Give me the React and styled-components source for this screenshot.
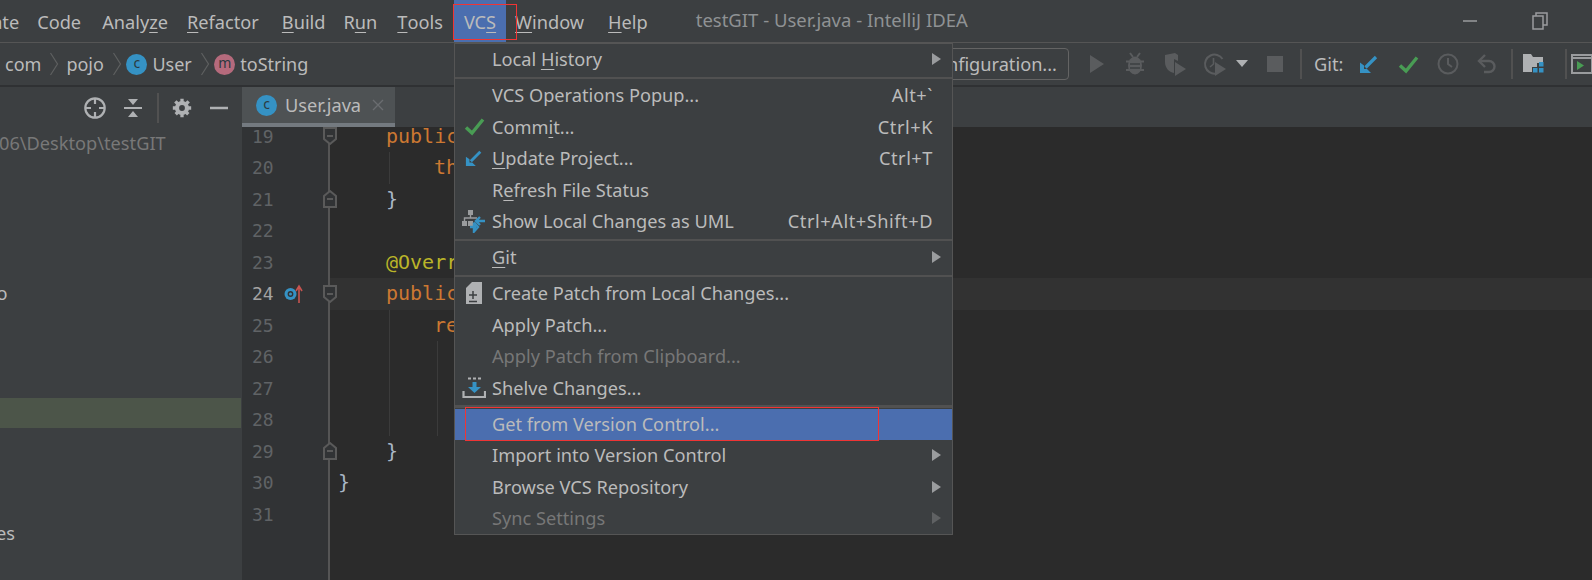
import React from 'react';
import styled, { createGlobalStyle } from 'styled-components';

const UI_FONT = '"Noto Sans", "Open Sans", sans-serif';
const BLUE = '#3592c4';
const GREEN = '#499c54';
const HL = '#4b6eaf';

const Global = createGlobalStyle`
  html, body { margin: 0; padding: 0; background: #3c3f41; }
  body { font-family: ${UI_FONT}; color: #bbb; }
  * { box-sizing: border-box; }
`;

const Page = styled.div`
  position: relative;
  width: 1592px;
  height: 580px;
  overflow: hidden;
  background: #3c3f41;
  font-size: 18.2px;
`;

const MenuBar = styled.div`
  display: flex;
  align-items: center;
  height: 43px;
  border-bottom: 1px solid #555;
`;

const MenuItem = styled.div`
  display: flex;
  align-items: center;
  height: 42px;
  padding: 1px ${p => p.$pad ?? 10}px 0;
  margin-left: ${p => p.$ml || 0}px;
  background: ${p => (p.$active ? HL : 'transparent')};
`;

const Mn = styled.span`
  text-decoration: underline;
  text-underline-offset: 3px;
  text-decoration-thickness: 1px;
`;

const Title = styled.div`
  margin: -3px 0 0 38px;
  font-size: 18.5px;
  color: #8f9294;
`;

const WinButtons = styled.div`
  display: flex;
  align-items: center;
  gap: 54px;
  margin-left: auto;
  margin-right: 44px;
`;

const NavBar = styled.div`
  display: flex;
  align-items: center;
  height: 44px;
  border-bottom: 2px solid #2f3133;
  overflow: hidden;
`;

const Crumbs = styled.div`
  display: flex;
  align-items: center;
  flex: 1;
  min-width: 0;
  padding-left: 5px;
  font-size: 18px;
`;

const CrumbSep = styled.svg`
  width: 10px;
  height: 24px;
  margin: 0 ${p => p.$gap - 18}px 0 8px;
  flex-shrink: 0;
`;

const Badge = styled.span`
  display: inline-flex;
  align-items: center;
  justify-content: center;
  flex-shrink: 0;
  width: 21px;
  height: 21px;
  margin-right: 5px;
  border-radius: 50%;
  background: ${p => p.$bg};
  color: #2b3a40;
  font-size: 14px;
  line-height: 1;
  padding-bottom: 2px;
`;

const ToolGroup = styled.div`
  display: flex;
  align-items: center;
  flex-shrink: 0;
  margin-right: -10px;
`;

const ConfigButton = styled.div`
  width: 260px;
  height: 32px;
  margin-right: 10px;
  padding-right: 11px;
  border: 1px solid #646464;
  border-radius: 4px;
  text-align: right;
  line-height: 31px;
  white-space: nowrap;
`;

const ToolSlot = styled.div`
  display: flex;
  align-items: center;
  justify-content: center;
  width: ${p => p.$w || 40}px;
  height: 30px;
  margin-left: ${p => p.$ml || 0}px;
`;

const ToolSep = styled.div`
  width: 2px;
  height: 30px;
  margin: 0 ${p => p.$mr || 0}px 0 ${p => p.$ml || 0}px;
  background: #515151;
`;

const GitLabel = styled.span`
  width: 35px;
`;

const Body = styled.div`
  display: flex;
  height: 493px;
`;

const Sidebar = styled.aside`
  width: 241px;
  flex-shrink: 0;
  overflow: hidden;
`;

const SideHeader = styled.div`
  display: flex;
  align-items: center;
  height: 41px;
  padding-left: 84px;
`;

const HeadIcon = styled.div`
  display: flex;
  align-items: center;
  justify-content: center;
  width: ${p => p.$w || 22}px;
  margin-right: ${p => p.$mr || 0}px;
`;

const HeadSep = styled.div`
  width: 2px;
  height: 30px;
  margin-right: 13px;
  background: #515151;
`;

const TreeRow = styled.div`
  display: flex;
  align-items: center;
  height: 30px;
  white-space: nowrap;
  background: ${p => (p.$selected ? '#4c5549' : 'transparent')};
  color: ${p => (p.$muted ? '#787878' : '#bbb')};
`;

const TreeLabel = styled.span`
  margin-left: ${p => p.$shift}px;
`;

const EditorPane = styled.section`
  flex: 1;
  min-width: 0;
  margin-left: 1px;
  display: flex;
  flex-direction: column;
`;

const TabStrip = styled.div`
  display: flex;
  height: 40px;
  flex-shrink: 0;
  background: #3c3f41;
`;

const Tab = styled.div`
  display: flex;
  align-items: center;
  width: 153px;
  height: 40px;
  padding-left: 14px;
  background: #4e5254;
  border-bottom: 4px solid #747a80;

  ${Badge} {
    margin-right: 8px;
  }
`;

const TabClose = styled.svg`
  width: 14px;
  height: 14px;
  margin-left: 10px;
`;

const Editor = styled.div`
  flex: 1;
  display: flex;
  overflow: hidden;
  background: #2b2b2b;
  font-family: "DejaVu Sans Mono", monospace;
`;

const Gutter = styled.div`
  position: relative;
  z-index: 1;
  width: 88px;
  flex-shrink: 0;
  background: #313335;
  border-right: 2px solid #555;
`;

const Lines = styled.div`
  margin-top: -6.5px;
`;

const GutterRow = styled.div`
  display: flex;
  align-items: center;
  height: 31.5px;
  padding-left: 10px;
  font-size: 18px;
  color: ${p => (p.$current ? '#a4a3a3' : '#606366')};
`;

const LineNo = styled.span`
  flex-shrink: 0;
  width: 32px;
`;

const MarkSlot = styled.span`
  display: flex;
  flex-shrink: 0;
  width: 30px;
`;

const FoldSlot = styled.span`
  display: flex;
  flex-shrink: 0;
  margin-left: 9px;
`;

const CodeColumn = styled.div`
  flex: 1;
  min-width: 0;
`;

const CodeLine = styled.div`
  position: relative;
  height: 31.5px;
  padding-left: ${p => 8 + p.$indent * 12}px;
  font-size: 20px;
  line-height: 31.5px;
  white-space: pre;
  background: ${p => (p.$current ? '#323232' : 'transparent')};
  color: #a9b7c6;
`;

const Guide = styled.i`
  position: absolute;
  top: 0;
  bottom: 0;
  left: ${p => p.$x}px;
  width: 1px;
  background: #3b3b3b;
`;

const Kw = styled.span`
  color: #cc7832;
`;

const Anno = styled.span`
  color: #bbb529;
`;

// the dropdown lies over the toolbar and the editor
const Popup = styled.div`
  position: absolute;
  left: 454px;
  top: 43px;
  width: 499px;
  height: 492px;
  background: #3c3f41;
  border: 1px solid #555;
`;

const PopRow = styled.div`
  display: flex;
  align-items: center;
  height: 31.5px;
  padding: 0 19px 1.5px 37px;
  background: ${p => (p.$hover ? HL : 'transparent')};
  color: ${p => (p.$off ? '#777' : '#bbb')};
`;

const PopIcon = styled.span`
  display: flex;
  justify-content: center;
  width: 26px;
  margin-left: -31px;
  margin-right: 5px;
`;

const Shortcut = styled.span`
  margin-left: auto;
  letter-spacing: 0.55px;
`;

const Arrow = styled.span`
  margin-left: auto;
  margin-right: -8px;
  width: 0;
  height: 0;
  border-left: 9px solid ${p => (p.$off ? '#5f6163' : '#9a9c9e')};
  border-top: 6px solid transparent;
  border-bottom: 6px solid transparent;
`;

const PopSep = styled.div`
  height: 4.5px;
  padding: 1px 0;
  &::after {
    content: '';
    display: block;
    height: 2.5px;
    background: #515151;
  }
`;

// red annotation rectangles drawn on top of the screenshot
const RedBox = styled.div`
  position: absolute;
  left: ${p => p.$x}px;
  top: ${p => p.$y}px;
  width: ${p => p.$w}px;
  height: ${p => p.$h}px;
  border: 1px solid #f03434;
`;

const Ic = ({ w = 20, h = 20, vb, children }) => (
  <svg width={w} height={h} viewBox={vb || `0 0 ${w} ${h}`} fill="none">{children}</svg>
);

const GRAY = '#5a5c5e';
const LIGHT = '#afb1b3';

const Chevron = ({ gap }) => (
  <CrumbSep $gap={gap} viewBox="0 0 10 24"><path d="M1.5 1 L8.5 12 L1.5 23" stroke="#5e6060" strokeWidth="1.2" fill="none" /></CrumbSep>
);

const UpdateIcon = ({ w = 20 }) => (
  <Ic w={w} h={w} vb="0 0 20 20">
    <path d="M17 3 L6.5 13.5" stroke={BLUE} strokeWidth="3.2" />
    <path d="M1 8.5 V19 H12 L8 15 H5 V11.5 Z" fill={BLUE} />
  </Ic>
);

const CheckIcon = ({ w = 21 }) => (
  <Ic w={w} h={w} vb="0 0 21 21">
    <path d="M2 11.5 L8 17 L19 3.5" stroke={GREEN} strokeWidth="3.4" />
  </Ic>
);

const PlayIcon = () => <Ic w={16} h={20}><path d="M1 1 L15 10 L1 19 Z" fill={GRAY} /></Ic>;

const BugIcon = () => (
  <Ic w={20} h={24}>
    <path d="M5 1 L8 5 M15 1 L12 5" stroke={GRAY} strokeWidth="2" />
    <ellipse cx="10" cy="13.5" rx="7" ry="9" fill={GRAY} />
    <path d="M1 9.5 H19 M1 18 H19" stroke={GRAY} strokeWidth="2" />
    <path d="M5 12 H15 M5 16 H15" stroke="#3c3f41" strokeWidth="1.5" />
  </Ic>
);

const CoverageIcon = () => (
  <Ic w={24} h={24}>
    <path d="M2 3 L12 1 L15 3 V9 L11 7 V21 C6 20 2 16 2 10 Z" fill={GRAY} />
    <path d="M12 10 L23 17 L12 24 Z" fill={GRAY} />
  </Ic>
);

const ProfilerIcon = () => (
  <Ic w={24} h={24}>
    <path d="M13 21.5 A9.5 9.5 0 1 1 19.5 7" stroke={GRAY} strokeWidth="2" />
    <path d="M10.5 6 V12 L7 15" stroke={GRAY} strokeWidth="1.6" />
    <path d="M12 10 L23 17 L12 24 Z" fill={GRAY} />
  </Ic>
);

const FolderIcon = () => (
  <Ic w={22} h={22}>
    <path d="M0 1 H8 L10 4 H20 V10 H14 V14 H9 V19 H0 Z" fill="#afb1b3" />
    <rect x="16" y="9" width="4.5" height="4.5" fill={BLUE} />
    <rect x="10" y="15" width="4.5" height="4.5" fill={BLUE} />
    <rect x="16" y="15" width="4.5" height="4.5" fill={BLUE} />
  </Ic>
);

const TerminalIcon = () => (
  <Ic w={22} h={22}>
    <rect x="1" y="2" width="20" height="18" stroke="#9a9c9e" strokeWidth="2" />
    <path d="M1 5 H21" stroke="#9a9c9e" strokeWidth="2" />
    <path d="M6 8 L13 12.5 L6 17 Z" fill={GREEN} />
  </Ic>
);

const UmlIcon = () => (
  <Ic w={24} h={24}>
    <rect x="6" y="1" width="5" height="5" fill="#9a9c9e" />
    <path d="M8.5 6 V9 M2.5 13 V9 H15" stroke="#9a9c9e" strokeWidth="1.4" />
    <rect x="0" y="12" width="5" height="5" fill="#9a9c9e" />
    <rect x="6" y="12" width="5" height="5" fill="#9a9c9e" />
    <path d="M23 12 H15 M18 8 L14 12 L18 16" stroke={BLUE} strokeWidth="2.4" />
    <path d="M8 18 H14 M12 13.5 L16 18 L12 22.5 V13.5" stroke={BLUE} strokeWidth="2.4" />
  </Ic>
);

const PatchIcon = () => (
  <Ic w={16} h={22}>
    <path d="M6 0 H16 V22 H0 V6 Z" fill="#afb1b3" />
    <path d="M3 13 H11 M7 9 V17 M3 19.5 H11" stroke="#3c3f41" strokeWidth="1.5" />
  </Ic>
);

const ShelveIcon = () => (
  <Ic w={24} h={22}>
    <path d="M6 1.5 H9 M11 1.5 H14 M16 1.5 H19" stroke="#afb1b3" strokeWidth="2" />
    <path d="M12.5 5 V11" stroke={BLUE} strokeWidth="4" />
    <path d="M6 10 H19 L12.5 16 Z" fill={BLUE} />
    <path d="M1.5 14 V20 H23 V14" stroke="#afb1b3" strokeWidth="2.2" />
  </Ic>
);

const FoldMark = ({ dir }) => (
  <Ic w={14} h={18}>
    <path
      d={dir === 'down' ? 'M1 1 H13 V12 L7 17 L1 12 Z' : 'M1 17 H13 V6 L7 1 L1 6 Z'}
      stroke="#5a5a5a"
      strokeWidth="2"
      fill="#313335"
    />
    <path d="M4 9 H10" stroke="#5a5a5a" strokeWidth="2" />
  </Ic>
);

const OverrideMark = () => (
  <Ic w={20} h={20}>
    <circle cx="6.5" cy="10" r="6" fill={BLUE} />
    <circle cx="6.5" cy="10" r="2.2" stroke="#313335" strokeWidth="1.4" />
    <path d="M15 19 V3 M12 7 L15 2 L18 7" stroke="#c75450" strokeWidth="1.6" />
  </Ic>
);

const MENU_ITEMS = [
  { pre: 'C', rest: 'ode', ml: 8 },
  { pre: 'Analy', u: 'z', rest: 'e', ml: 1 },
  { u: 'R', rest: 'efactor', ml: -1 },
  { u: 'B', rest: 'uild', ml: 3 },
  { pre: 'R', u: 'u', rest: 'n', ml: -2 },
  { u: 'T', rest: 'ools' },
];

const POPUP = [
  { label: <>Local <Mn>H</Mn>istory</>, arrow: true },
  'sep',
  { label: 'VCS Operations Popup...', keys: 'Alt+`' },
  { label: <>Comm<Mn>i</Mn>t...</>, keys: 'Ctrl+K', icon: <CheckIcon w={21} /> },
  { label: <><Mn>U</Mn>pdate Project...</>, keys: 'Ctrl+T', icon: <UpdateIcon w={18} /> },
  { label: <>R<Mn>e</Mn>fresh File Status</> },
  { label: 'Show Local Changes as UML', keys: 'Ctrl+Alt+Shift+D', icon: <UmlIcon /> },
  'sep',
  { label: <><Mn>G</Mn>it</>, arrow: true },
  'sep',
  { label: 'Create Patch from Local Changes...', icon: <PatchIcon /> },
  { label: 'Apply Patch...' },
  { label: 'Apply Patch from Clipboard...', off: true },
  { label: 'Shelve Changes...', icon: <ShelveIcon /> },
  'sep',
  { label: 'Get from Version Control...', hover: true },
  { label: 'Import into Version Control', arrow: true },
  { label: 'Browse VCS Repository', arrow: true },
  { label: 'Sync Settings', arrow: true, off: true },
];

const CODE = [
  { no: 19, fold: 'down', indent: 4, text: <Kw>public</Kw> },
  { no: 20, indent: 8, text: <Kw>this</Kw>, guides: [59] },
  { no: 21, fold: 'up', indent: 4, text: '}' },
  { no: 22, indent: 0, text: '' },
  { no: 23, indent: 4, text: <Anno>@Override</Anno> },
  { no: 24, fold: 'down', indent: 4, text: <Kw>public</Kw>, current: true, mark: true },
  { no: 25, indent: 8, text: <Kw>return</Kw>, guides: [59] },
  { no: 26, indent: 0, text: '', guides: [59, 107] },
  { no: 27, indent: 0, text: '', guides: [59, 107] },
  { no: 28, indent: 0, text: '', guides: [59, 107] },
  { no: 29, fold: 'up', indent: 4, text: '}' },
  { no: 30, indent: 0, text: '}' },
  { no: 31, indent: 0, text: '' },
  { no: 32, indent: 0, text: '' },
  { no: 33, indent: 0, text: '' },
];

const TREE = [
  { text: '06\\Desktop\\testGIT', muted: true, shift: -1 },
  {}, {}, {}, {},
  { text: 'demo', shift: -42 },
  {}, {}, {},
  { selected: true },
  {}, {}, {},
  { text: 'Libraries', shift: -59 },
];

export default function App() {
  return (
    <Page>
      <Global />
      <MenuBar>
        <MenuItem $pad={0} $ml={-57}>Navigate</MenuItem>
        {MENU_ITEMS.map((m, i) => (
          <MenuItem key={i} $ml={m.ml}>{m.pre}{m.u && <Mn>{m.u}</Mn>}{m.rest}</MenuItem>
        ))}
        <MenuItem $active $ml={1}><span>VC<Mn>S</Mn></span></MenuItem>
        <MenuItem $ml={-1}><span><Mn>W</Mn>indow</span></MenuItem>
        <MenuItem $ml={4}><span><Mn>H</Mn>elp</span></MenuItem>
        <Title>testGIT - User.java - IntelliJ IDEA</Title>
        <WinButtons>
          <Ic w={16} h={16}><path d="M1 8 H15" stroke="#9a9c9e" strokeWidth="1.5" /></Ic>
          <Ic w={16} h={18}>
            <rect x="1" y="4" width="10" height="13" stroke="#9a9c9e" strokeWidth="1.5" />
            <path d="M4 4 V1 H15 V13 H11" stroke="#9a9c9e" strokeWidth="1.5" />
          </Ic>
        </WinButtons>
      </MenuBar>
      <NavBar>
        <Crumbs>
          com<Chevron gap={25} />pojo<Chevron gap={22.5} />
          <Badge $bg={BLUE}>c</Badge>User<Chevron gap={22.5} />
          <Badge $bg="#b56a7c">m</Badge>toString
        </Crumbs>
        <ToolGroup>
          <ConfigButton>Add Configuration...</ConfigButton>
          <ToolSlot $w={36}><PlayIcon /></ToolSlot>
          <ToolSlot><BugIcon /></ToolSlot>
          <ToolSlot><CoverageIcon /></ToolSlot>
          <ToolSlot><ProfilerIcon /></ToolSlot>
          <ToolSlot $w={14}><Ic w={12} h={8}><path d="M0 0 H12 L6 7 Z" fill={LIGHT} /></Ic></ToolSlot>
          <ToolSlot $ml={6}><Ic w={16} h={16}><rect width="16" height="16" fill={GRAY} /></Ic></ToolSlot>
          <ToolSep $ml={5} $mr={12} />
          <GitLabel>Git:</GitLabel>
          <ToolSlot><UpdateIcon /></ToolSlot>
          <ToolSlot $w={39}><CheckIcon /></ToolSlot>
          <ToolSlot $w={39}>
            <Ic w={22} h={22}>
              <circle cx="11" cy="11" r="9.5" stroke={GRAY} strokeWidth="2" />
              <path d="M11 5 V11 L15 14" stroke={GRAY} strokeWidth="2" />
            </Ic>
          </ToolSlot>
          <ToolSlot>
            <Ic w={20} h={20}>
              <path d="M3 7 H12 A5.5 5.5 0 0 1 12 18 H7" stroke={GRAY} strokeWidth="2.4" />
              <path d="M8 1 L2 7 L8 13" stroke={GRAY} strokeWidth="2.4" />
            </Ic>
          </ToolSlot>
          <ToolSep $ml={4} $mr={1} />
          <ToolSlot><FolderIcon /></ToolSlot>
          <ToolSep $ml={11} $mr={-5} />
          <ToolSlot><TerminalIcon /></ToolSlot>
        </ToolGroup>
      </NavBar>
      <Body>
        <Sidebar>
          <SideHeader>
            <HeadIcon $mr={17}>
              <Ic w={22} h={22}>
                <circle cx="11" cy="11" r="9.7" stroke={LIGHT} strokeWidth="2.2" />
                <path d="M11 1 V7 M11 15 V21 M1 11 H7 M15 11 H21" stroke={LIGHT} strokeWidth="2.2" />
              </Ic>
            </HeadIcon>
            <HeadIcon $mr={14} $w={20}>
              <Ic w={18} h={20}>
                <path d="M0 10 H18" stroke={LIGHT} strokeWidth="2" />
                <path d="M4 1 H14 L9 7 Z M4 19 H14 L9 13 Z" fill={LIGHT} />
              </Ic>
            </HeadIcon>
            <HeadSep />
            <HeadIcon $mr={18} $w={20}>
              <Ic w={20} h={20} vb="0 0 24 24">
                <circle cx="12" cy="12" r="6" stroke={LIGHT} strokeWidth="5" />
                <path d="M12 1 V23 M1 12 H23 M4 4 L20 20 M20 4 L4 20" stroke={LIGHT} strokeWidth="4" strokeDasharray="5 12" />
              </Ic>
            </HeadIcon>
            <Ic w={18} h={4}><path d="M0 2 H18" stroke={LIGHT} strokeWidth="2.5" /></Ic>
          </SideHeader>
          {TREE.map((row, i) => (
            <TreeRow key={i} $selected={row.selected} $muted={row.muted}>
              {row.text && <TreeLabel $shift={row.shift}>{row.text}</TreeLabel>}
            </TreeRow>
          ))}
        </Sidebar>
        <EditorPane>
          <TabStrip>
            <Tab>
              <Badge $bg={BLUE}>c</Badge>
              User.java
              <TabClose viewBox="0 0 14 14">
                <path d="M2 2 L12 12 M12 2 L2 12" stroke="#6a6d70" strokeWidth="1.4" />
              </TabClose>
            </Tab>
          </TabStrip>
          <Editor>
            <Gutter>
              <Lines>
                {CODE.map(line => (
                  <GutterRow key={line.no} $current={line.current}>
                    <LineNo>{line.no <= 31 ? line.no : ''}</LineNo>
                    <MarkSlot>{line.mark && <OverrideMark />}</MarkSlot>
                    {line.fold && <FoldSlot><FoldMark dir={line.fold} /></FoldSlot>}
                  </GutterRow>
                ))}
              </Lines>
            </Gutter>
            <CodeColumn>
              <Lines>
                {CODE.map(line => (
                  <CodeLine key={line.no} $indent={line.indent} $current={line.current}>
                    {(line.guides || []).map(x => <Guide key={x} $x={x} />)}
                    {line.text}
                  </CodeLine>
                ))}
              </Lines>
            </CodeColumn>
          </Editor>
        </EditorPane>
      </Body>
      <Popup>
        {POPUP.map((row, i) => (row === 'sep' ? (
          <PopSep key={i} />
        ) : (
          <PopRow key={i} $hover={row.hover} $off={row.off}>
            {row.icon ? <PopIcon>{row.icon}</PopIcon> : null}
            <span>{row.label}</span>
            {row.keys && <Shortcut>{row.keys}</Shortcut>}
            {row.arrow && <Arrow $off={row.off} />}
          </PopRow>
        )))}
      </Popup>
      <RedBox $x={453} $y={4} $w={64} $h={36} />
      <RedBox $x={465} $y={407} $w={414} $h={34} />
    </Page>
  );
}
